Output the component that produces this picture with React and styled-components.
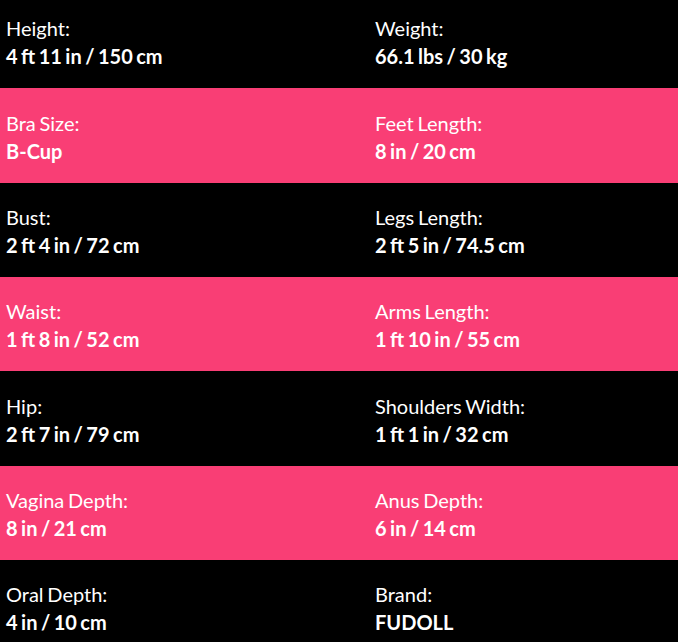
import React from "react";
import styled, { createGlobalStyle } from "styled-components";

const GlobalStyle = createGlobalStyle`
  html, body {
    margin: 0;
    padding: 0;
    background: #000;
    overflow: hidden;
  }
  body {
    font-family: Lato, "Open Sans", sans-serif;
  }
`;

const Table = styled.div`
  margin-top: -6px;
  width: 678px;
`;

const Row = styled.div`
  display: grid;
  grid-template-columns: 369px 1fr;
  height: 94.33px;
  box-sizing: border-box;
  padding: 20.3px 0 0 6px;
  background: ${(p) => (p.pink ? "#f93e75" : "#000")};
`;

const Cell = styled.div`
  color: #fff;
  font-size: 20px;
  line-height: 28px;
  word-spacing: -1.4px;
`;

const Label = styled.div`
  font-weight: 400;
`;

const Value = styled.div`
  font-weight: 700;
`;

const specs = [
  [["Height:", "4 ft 11 in / 150 cm"], ["Weight:", "66.1 lbs / 30 kg"]],
  [["Bra Size:", "B-Cup"], ["Feet Length:", "8 in / 20 cm"]],
  [["Bust:", "2 ft 4 in / 72 cm"], ["Legs Length:", "2 ft 5 in / 74.5 cm"]],
  [["Waist:", "1 ft 8 in / 52 cm"], ["Arms Length:", "1 ft 10 in / 55 cm"]],
  [["Hip:", "2 ft 7 in / 79 cm"], ["Shoulders Width:", "1 ft 1 in / 32 cm"]],
  [["Vagina Depth:", "8 in / 21 cm"], ["Anus Depth:", "6 in / 14 cm"]],
  [["Oral Depth:", "4 in / 10 cm"], ["Brand:", "FUDOLL"]],
];

const App = () => {
  return (
    <>
      <GlobalStyle />
      <Table>
        {specs.map((row, i) => (
          <Row key={i} pink={i % 2 === 1}>
            {row.map(([label, value]) => (
              <Cell key={label}>
                <Label>{label}</Label>
                <Value>{value}</Value>
              </Cell>
            ))}
          </Row>
        ))}
      </Table>
    </>
  );
};

export default App;
